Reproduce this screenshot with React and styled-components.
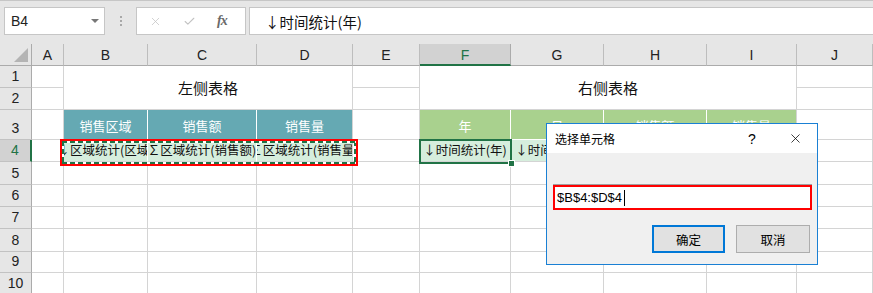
import React from 'react'
import styled, { createGlobalStyle, css } from 'styled-components'
import { X, Check } from 'lucide-react'

const GRID = '#d4d4d4'
const XL_GREEN = '#217346'
const CJK = "'Noto Sans CJK SC', 'Liberation Sans', sans-serif"
const LATIN = "'Liberation Sans', 'Noto Sans CJK SC', sans-serif"

const COL_WIDTHS = [32, 84, 109, 96, 67, 91, 93, 103, 90, 76]
const LETTERS = ['A', 'B', 'C', 'D', 'E', 'F', 'G', 'H', 'I', 'J']
const ROW_HEIGHTS = [22, 22, 30, 22, 23, 22, 22, 23, 21, 22]

// r / c are 1-based sheet row and 0-based column (A = 0)
const CELLS = [
  { r: 1, c: 1, rs: 2, cs: 3, text: '左侧表格', kind: 'title' },
  { r: 1, c: 5, rs: 2, cs: 4, text: '右侧表格', kind: 'title' },
  { r: 3, c: 1, text: '销售区域', kind: 'teal' },
  { r: 3, c: 2, text: '销售额', kind: 'teal' },
  { r: 3, c: 3, text: '销售量', kind: 'teal', edge: true },
  { r: 3, c: 5, text: '年', kind: 'green' },
  { r: 3, c: 6, text: '月', kind: 'green' },
  { r: 3, c: 7, text: '销售额', kind: 'green' },
  { r: 3, c: 8, text: '销售量', kind: 'green', edge: true },
  { r: 4, c: 1, text: '↓区域统计(区域)', kind: 'mint' },
  { r: 4, c: 2, text: '∑区域统计(销售额)', kind: 'mint' },
  { r: 4, c: 3, text: '∑区域统计(销售量)', kind: 'mint', edge: true },
  { r: 4, c: 5, text: '↓时间统计(年)', kind: 'mint' },
  { r: 4, c: 6, text: '↓时间统计(月)', kind: 'mint' },
  { r: 4, c: 7, text: '∑时间统计(销售额)', kind: 'mint' },
  { r: 4, c: 8, text: '∑时间统计(销售量)', kind: 'mint', edge: true }
]

const GlobalStyle = createGlobalStyle`
  html, body { margin: 0; padding: 0; background: #fff; }
  body { font-family: ${CJK}; }
  *, *::before, *::after { box-sizing: border-box; }
`

const Window = styled.div`
  position: relative;
  width: 873px;
  height: 293px;
  overflow: hidden;
  background: #fff;
`

const FormulaBar = styled.div`
  display: flex;
  align-items: flex-start;
  height: 44px;
  padding: 6px 0 0 4px;
  background: #e6e6e6;
  border-top: 1px solid #c6c6c6;
`

const NameBox = styled.div`
  display: flex;
  align-items: center;
  justify-content: space-between;
  width: 101px;
  height: 28px;
  padding: 0 5px 0 6px;
  background: #fff;
  border: 1px solid #c6c6c6;
  font-family: ${LATIN};
  font-size: 14px;
  color: #222;
`

const DropCaret = styled.span`
  width: 0;
  height: 0;
  border-left: 4px solid transparent;
  border-right: 4px solid transparent;
  border-top: 4px solid #777;
`

const Grip = styled.div`
  display: flex;
  flex-direction: column;
  gap: 2px;
  align-items: center;
  width: 31px;
  padding-top: 9px;

  span {
    width: 2px;
    height: 2px;
    background: #a8a8a8;
  }
`

const FnBox = styled.div`
  display: flex;
  align-items: center;
  width: 110px;
  height: 28px;
  padding: 0 10px 0 12px;
  gap: 21px;
  background: #fff;
  border: 1px solid #c6c6c6;
  color: #c3c3c3;
`

const FxMark = styled.span`
  font-family: 'Liberation Serif', serif;
  font-style: italic;
  font-weight: bold;
  font-size: 14px;
  color: #6a6a6a;
  letter-spacing: -1px;
`

const FormulaInput = styled.div`
  display: flex;
  align-items: center;
  flex: 1;
  height: 28px;
  margin-left: 3px;
  margin-right: -2px;
  padding-left: 15px;
  background: #fff;
  border: 1px solid #c6c6c6;
  font-size: 14.5px;
  color: #111;
`

const Sheet = styled.div`
  display: grid;
  grid-template-columns: 32px ${COL_WIDTHS.map(w => w + 'px').join(' ')};
  grid-template-rows: 22px ${ROW_HEIGHTS.map(h => h + 'px').join(' ')};
  background: #fff;
`

const CornerCell = styled.div`
  display: flex;
  align-items: flex-end;
  justify-content: flex-end;
  padding: 0 3px 3px 0;
  background: #e6e6e6;
  border-right: 1px solid #ababab;
  border-bottom: 1px solid #ababab;

  &::after {
    content: '';
    border-left: 14px solid transparent;
    border-bottom: 14px solid #b4b4b4;
  }
`

const ColHead = styled.div`
  display: flex;
  align-items: center;
  justify-content: center;
  padding-top: 1px;
  background: ${p => (p.$active ? '#d2d2d2' : '#e6e6e6')};
  border-right: 1px solid ${p => (p.$active ? '#ababab' : '#bdbdbd')};
  border-bottom: ${p => (p.$active ? `2px solid ${XL_GREEN}` : '1px solid #ababab')};
  font-family: ${LATIN};
  font-size: 14px;
  color: ${p => (p.$active ? XL_GREEN : '#222')};
`

const RowHead = styled.div`
  grid-column: 1;
  grid-row: ${p => p.$row + 1};
  display: flex;
  align-items: flex-end;
  justify-content: center;
  padding-bottom: 3px;
  background: ${p => (p.$active ? '#d2d2d2' : '#e6e6e6')};
  border-right: ${p => (p.$active ? `2px solid ${XL_GREEN}` : '1px solid #ababab')};
  border-bottom: 1px solid #c2c2c2;
  font-family: ${LATIN};
  font-size: 14px;
  color: ${p => (p.$active ? XL_GREEN : '#222')};
`

const kinds = {
  plain: css`
    background: #fff;
  `,
  title: css`
    background: #fff;
    font-size: 15px;
    color: #111;
  `,
  teal: css`
    background: #65a9b3;
    color: #fff;
    font-size: 13px;
    align-items: flex-end;
    padding-bottom: 7px;
    border-right-color: #fff;
    border-bottom-color: #fff;
  `,
  green: css`
    background: #a9d18e;
    color: #fff;
    font-size: 13px;
    align-items: flex-end;
    padding-bottom: 7px;
    border-right-color: #fff;
    border-bottom-color: #fff;
  `,
  mint: css`
    background: #d6eedd;
    color: #111;
    font-size: 12.5px;
    border-right-color: #fff;
  `
}

const Cell = styled.div`
  grid-column: ${p => p.$col} / span ${p => p.$cs};
  grid-row: ${p => p.$row} / span ${p => p.$rs};
  display: flex;
  align-items: center;
  justify-content: center;
  min-width: 0;
  overflow: hidden;
  white-space: nowrap;
  border-right: 1px solid ${GRID};
  border-bottom: 1px solid ${GRID};
  line-height: 1;
  ${p => kinds[p.$kind]}
  ${p => p.$edge && css`border-right-color: ${GRID};`}
`

const dash = (deg) =>
  `repeating-linear-gradient(${deg}deg, ${XL_GREEN} 0 5px, #fff 5px 8px)`

// red annotation box with Excel's copy marquee inside, laid over B4:D4
const RedMark = styled.div`
  grid-column: 3 / 6;
  grid-row: 5;
  z-index: 2;
  margin: -1px -5px -4px -4px;
  border: 2px solid #f00;
  pointer-events: none;

  &::after {
    content: '';
    display: block;
    height: 100%;
    background:
      ${dash(90)} top / 100% 2px no-repeat,
      ${dash(90)} bottom / 100% 2px no-repeat,
      ${dash(180)} left / 2px 100% no-repeat,
      ${dash(180)} right / 2px 100% no-repeat;
  }
`

const ActiveCell = styled.div`
  grid-column: 7;
  grid-row: 5;
  z-index: 2;
  position: relative;
  margin: -1px -1px -2px -1px;
  border: 2px solid ${XL_GREEN};
  pointer-events: none;
`

const FillHandle = styled.span`
  position: absolute;
  right: -5px;
  bottom: -5px;
  width: 7px;
  height: 7px;
  background: ${XL_GREEN};
  border: 1px solid #fff;
`

const Dialog = styled.div`
  position: absolute;
  left: 546px;
  top: 123px;
  width: 272px;
  height: 142px;
  display: flex;
  flex-direction: column;
  background: #f0f0f0;
  border: 1px solid #1a80d4;
  z-index: 5;
`

const TitleBar = styled.div`
  display: flex;
  align-items: center;
  height: 29px;
  padding: 0 14px 0 8px;
  background: #fff;
  font-size: 12px;
  color: #000;
`

const TitleText = styled.span`
  flex: 1;
`

const HelpMark = styled.span`
  width: 12px;
  margin-right: 30px;
  font-family: ${LATIN};
  font-size: 14px;
  text-align: center;
`

const DialogBody = styled.div`
  display: flex;
  flex-direction: column;
  padding: 31px 5px 0 6px;
`

const RefField = styled.div`
  border-top: 1px solid #a0a0a0;
`

const RefInput = styled.div`
  display: flex;
  align-items: center;
  height: 25px;
  padding-left: 2px;
  background: #fff;
  border: 2px solid #f00;
  border-top-width: 2px;
  font-family: ${LATIN};
  font-size: 13px;
  color: #000;
`

const Caret = styled.span`
  width: 1px;
  height: 16px;
  margin-left: 2px;
  background: #000;
`

const ButtonRow = styled.div`
  display: flex;
  justify-content: flex-end;
  gap: 11px;
  margin-top: 15px;
  padding-right: 2px;
`

const DlgButton = styled.div`
  display: flex;
  align-items: center;
  justify-content: center;
  width: ${p => (p.$primary ? 73 : 74)}px;
  height: 28px;
  background: #e1e1e1;
  border: ${p => (p.$primary ? '2px solid #0078d7' : '1px solid #adadad')};
  font-size: 12.5px;
  color: #000;
`

function buildCells() {
  const covered = new Set()
  CELLS.forEach(({ r, c, rs = 1, cs = 1 }) => {
    for (let i = 0; i < rs; i++) {
      for (let j = 0; j < cs; j++) covered.add(`${r + i}:${c + j}`)
    }
  })
  const byKey = Object.fromEntries(CELLS.map(cell => [`${cell.r}:${cell.c}`, cell]))
  const out = []
  ROW_HEIGHTS.forEach((_, ri) => {
    const r = ri + 1
    LETTERS.forEach((_, c) => {
      const key = `${r}:${c}`
      const cell = byKey[key]
      if (!cell && covered.has(key)) return
      const { rs = 1, cs = 1, text = '', kind = 'plain', edge = false } = cell || {}
      out.push(
        <Cell key={key} $row={r + 1} $col={c + 2} $rs={rs} $cs={cs} $kind={kind} $edge={edge}>
          {text}
        </Cell>
      )
    })
  })
  return out
}

export default function App() {
  return (
    <Window>
      <GlobalStyle />
      <FormulaBar>
        <NameBox>
          B4
          <DropCaret />
        </NameBox>
        <Grip><span /><span /><span /></Grip>
        <FnBox>
          <X size={13} strokeWidth={1.4} />
          <Check size={13} strokeWidth={2} />
          <FxMark>fx</FxMark>
        </FnBox>
        <FormulaInput>↓时间统计(年)</FormulaInput>
      </FormulaBar>

      <Sheet>
        <CornerCell />
        {LETTERS.map(l => (
          <ColHead key={l} $active={l === 'F'}>{l}</ColHead>
        ))}
        {ROW_HEIGHTS.map((_, i) => (
          <RowHead key={i} $row={i + 1} $active={i + 1 === 4}>{i + 1}</RowHead>
        ))}
        {buildCells()}
        <RedMark />
        <ActiveCell><FillHandle /></ActiveCell>
      </Sheet>

      <Dialog>
        <TitleBar>
          <TitleText>选择单元格</TitleText>
          <HelpMark>?</HelpMark>
          <X size={15} strokeWidth={1.2} />
        </TitleBar>
        <DialogBody>
          <RefField>
            <RefInput>
              $B$4:$D$4
              <Caret />
            </RefInput>
          </RefField>
          <ButtonRow>
            <DlgButton $primary>确定</DlgButton>
            <DlgButton>取消</DlgButton>
          </ButtonRow>
        </DialogBody>
      </Dialog>
    </Window>
  )
}
